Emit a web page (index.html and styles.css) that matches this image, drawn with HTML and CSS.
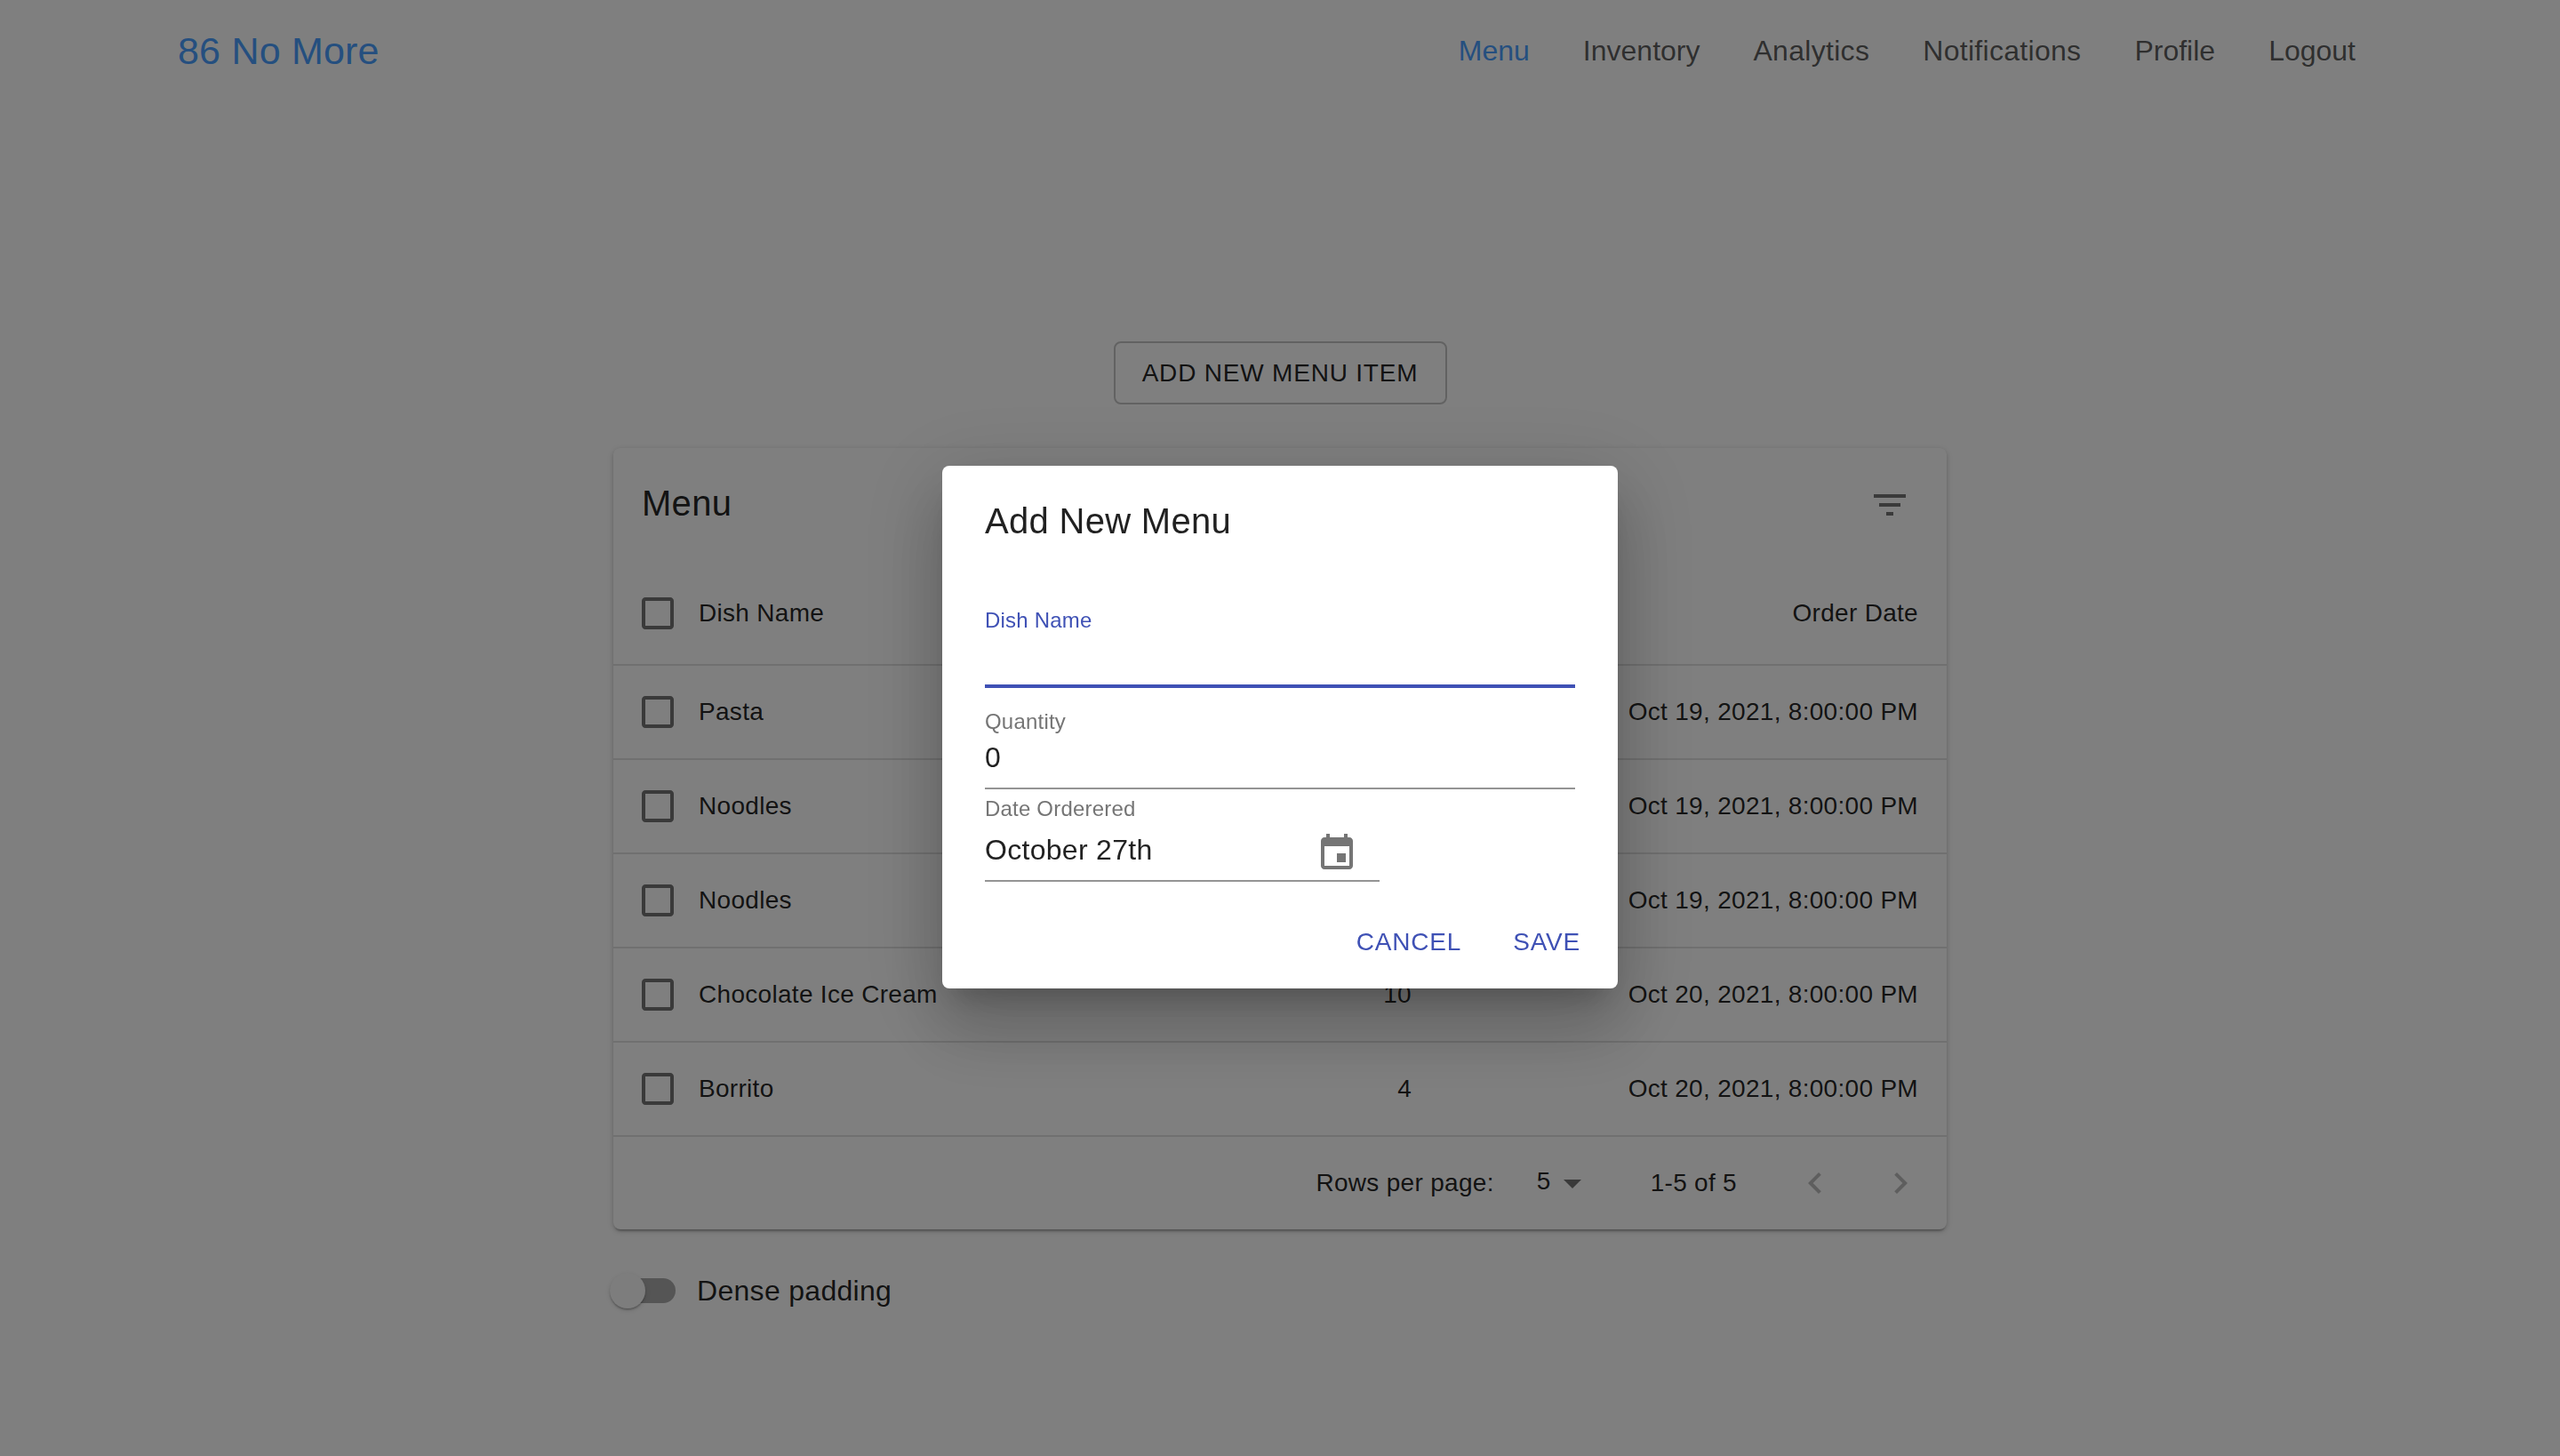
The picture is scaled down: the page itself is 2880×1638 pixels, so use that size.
FILE: index.html
```html
<!DOCTYPE html>
<html lang="en">
<head>
    <meta charset="UTF-8">
    <title>86 No More</title>
    <link rel="stylesheet" href="styles.css">
</head>
<body>
    <nav class="navbar">
        <a class="brand">86 No More</a>
        <div class="nav-links">
            <a class="nav-link active">Menu</a>
            <a class="nav-link">Inventory</a>
            <a class="nav-link nav-link-loose">Analytics</a>
            <a class="nav-link nav-link-loose">Notifications</a>
            <a class="nav-link">Profile</a>
            <a class="nav-link">Logout</a>
        </div>
    </nav>

    <main class="content">
        <button class="add-button">ADD NEW MENU ITEM</button>

        <section class="card">
            <div class="toolbar">
                <h2 class="toolbar-title">Menu</h2>
                <svg class="icon filter-icon" viewBox="0 0 24 24"><path d="M10 18h4v-2h-4v2zM3 6v2h18V6H3zm3 7h12v-2H6v2z"/></svg>
            </div>

            <table class="menu-table">
                <thead>
                    <tr class="head-row">
                        <th class="check-cell"><svg class="icon check-icon" viewBox="0 0 24 24"><path d="M19 5v14H5V5h14m0-2H5c-1.1 0-2 .9-2 2v14c0 1.1.9 2 2 2h14c1.1 0 2-.9 2-2V5c0-1.1-.9-2-2-2z"/></svg></th>
                        <th class="name-cell">Dish Name</th>
                        <th class="qty-cell">Quantity</th>
                        <th class="date-cell">Order Date</th>
                    </tr>
                </thead>
                <tbody>
                    <tr>
                        <td class="check-cell"><svg class="icon check-icon" viewBox="0 0 24 24"><path d="M19 5v14H5V5h14m0-2H5c-1.1 0-2 .9-2 2v14c0 1.1.9 2 2 2h14c1.1 0 2-.9 2-2V5c0-1.1-.9-2-2-2z"/></svg></td>
                        <td class="name-cell">Pasta</td>
                        <td class="qty-cell">5</td>
                        <td class="date-cell">Oct 19, 2021, 8:00:00 PM</td>
                    </tr>
                    <tr>
                        <td class="check-cell"><svg class="icon check-icon" viewBox="0 0 24 24"><path d="M19 5v14H5V5h14m0-2H5c-1.1 0-2 .9-2 2v14c0 1.1.9 2 2 2h14c1.1 0 2-.9 2-2V5c0-1.1-.9-2-2-2z"/></svg></td>
                        <td class="name-cell">Noodles</td>
                        <td class="qty-cell">5</td>
                        <td class="date-cell">Oct 19, 2021, 8:00:00 PM</td>
                    </tr>
                    <tr>
                        <td class="check-cell"><svg class="icon check-icon" viewBox="0 0 24 24"><path d="M19 5v14H5V5h14m0-2H5c-1.1 0-2 .9-2 2v14c0 1.1.9 2 2 2h14c1.1 0 2-.9 2-2V5c0-1.1-.9-2-2-2z"/></svg></td>
                        <td class="name-cell">Noodles</td>
                        <td class="qty-cell">5</td>
                        <td class="date-cell">Oct 19, 2021, 8:00:00 PM</td>
                    </tr>
                    <tr>
                        <td class="check-cell"><svg class="icon check-icon" viewBox="0 0 24 24"><path d="M19 5v14H5V5h14m0-2H5c-1.1 0-2 .9-2 2v14c0 1.1.9 2 2 2h14c1.1 0 2-.9 2-2V5c0-1.1-.9-2-2-2z"/></svg></td>
                        <td class="name-cell">Chocolate Ice Cream</td>
                        <td class="qty-cell">10</td>
                        <td class="date-cell">Oct 20, 2021, 8:00:00 PM</td>
                    </tr>
                    <tr>
                        <td class="check-cell"><svg class="icon check-icon" viewBox="0 0 24 24"><path d="M19 5v14H5V5h14m0-2H5c-1.1 0-2 .9-2 2v14c0 1.1.9 2 2 2h14c1.1 0 2-.9 2-2V5c0-1.1-.9-2-2-2z"/></svg></td>
                        <td class="name-cell">Borrito</td>
                        <td class="qty-cell">4</td>
                        <td class="date-cell">Oct 20, 2021, 8:00:00 PM</td>
                    </tr>
                </tbody>
            </table>

            <div class="pagination">
                <span class="rows-label">Rows per page:</span>
                <span class="rows-value">5</span>
                <svg class="icon arrow-icon" viewBox="0 0 24 24"><path d="M7 10l5 5 5-5z"/></svg>
                <span class="page-range">1-5 of 5</span>
                <span class="page-button"><svg class="icon disabled-icon" viewBox="0 0 24 24"><path d="M15.41 7.41L14 6l-6 6 6 6 1.41-1.41L10.83 12z"/></svg></span>
                <span class="page-button"><svg class="icon disabled-icon" viewBox="0 0 24 24"><path d="M10 6L8.59 7.41 13.17 12l-4.58 4.59L10 18l6-6z"/></svg></span>
            </div>
        </section>

        <div class="dense-row">
            <span class="switch">
                <span class="switch-track"></span>
                <span class="switch-knob"></span>
            </span>
            <span class="dense-label">Dense padding</span>
        </div>
    </main>

    <div class="backdrop">
        <div class="dialog">
            <h2 class="dialog-title">Add New Menu</h2>
            <div class="dialog-body">
                <div class="field field-focused">
                    <label class="field-label">Dish Name</label>
                    <div class="field-empty"></div>
                </div>
                <div class="field field-qty">
                    <label class="field-label">Quantity</label>
                    <div class="field-value">0</div>
                </div>
                <div class="field field-date">
                    <label class="field-label">Date Orderered</label>
                    <div class="date-row">
                        <div class="field-value">October 27th</div>
                        <svg class="icon event-icon" viewBox="0 0 24 24"><path d="M17 12h-5v5h5v-5zM16 1v2H8V1H6v2H5c-1.11 0-1.99.9-1.99 2L3 19c0 1.1.89 2 2 2h14c1.1 0 2-.9 2-2V5c0-1.1-.9-2-2-2h-1V1h-2zm3 18H5V8h14v11z"/></svg>
                    </div>
                </div>
            </div>
            <div class="dialog-actions">
                <button class="text-button">CANCEL</button>
                <button class="text-button">SAVE</button>
            </div>
        </div>
    </div>
</body>
</html>
```

FILE: styles.css
```css
* {
    box-sizing: border-box;
}
body {
    margin: 0;
    min-height: 1638px;
    background-color: #fff;
    font-family: "Liberation Sans", Arial, sans-serif;
    font-variant-ligatures: none;
    color: rgba(0, 0, 0, 0.87);
}
.icon {
    display: block;
    width: 48px;
    height: 48px;
    flex-shrink: 0;
    fill: rgba(0, 0, 0, 0.54);
}

/* top bar */
.navbar {
    display: flex;
    justify-content: space-between;
    align-items: center;
    height: 114px;
    padding: 0 230px 0 200px;
}
.brand {
    font-size: 43px;
    letter-spacing: 0.2px;
    color: #4a9fff;
}
.nav-links {
    display: flex;
    gap: 60px;
}
.nav-link {
    font-size: 32px;
    color: rgba(0, 0, 0, 0.65);
}
.nav-link-loose {
    letter-spacing: 0.3px;
}
.nav-link.active {
    color: #4a9fff;
}

/* page under the dialog */
.content {
    display: flex;
    flex-direction: column;
    align-items: center;
    padding-top: 270px;
}
.add-button {
    width: 375px;
    height: 71px;
    background: none;
    border: 2px solid rgba(0, 0, 0, 0.23);
    border-radius: 8px;
    font-family: inherit;
    font-size: 28px;
    letter-spacing: 0.8px;
    color: rgba(0, 0, 0, 0.87);
}
.card {
    width: 1500px;
    margin-top: 49px;
    border-radius: 8px;
    background-color: #fff;
    box-shadow: 0 4px 2px -2px rgba(0, 0, 0, 0.2), 0 2px 4px 0 rgba(0, 0, 0, 0.14), 0 2px 10px 0 rgba(0, 0, 0, 0.12);
}
.toolbar {
    display: flex;
    justify-content: space-between;
    align-items: center;
    height: 128px;
    padding: 0 40px 0 32px;
}
.toolbar-title {
    margin: 0 0 3px;
    font-size: 40px;
    font-weight: 400;
    letter-spacing: 0.3px;
}
.menu-table {
    width: 100%;
    border-collapse: collapse;
    table-layout: fixed;
    font-size: 28px;
    letter-spacing: 0.3px;
}
.menu-table th,
.menu-table td {
    height: 106px;
    padding: 0;
    border-bottom: 2px solid #e0e0e0;
    font-weight: 400;
    text-align: left;
}
.menu-table .head-row th {
    height: 116px;
}
.menu-table .check-cell {
    width: 96px;
    padding-left: 26px;
}
.menu-table .qty-cell {
    width: 400px;
    text-align: right;
}
.menu-table .date-cell {
    width: 602px;
    padding-right: 32px;
    text-align: right;
}
.pagination {
    display: flex;
    justify-content: flex-end;
    align-items: center;
    height: 104px;
    padding-right: 4px;
    font-size: 28px;
    letter-spacing: 0.3px;
}
.rows-label {
    margin-right: 48px;
}
.rows-value {
    position: relative;
    top: -2px;
}
.page-range {
    margin-left: 64px;
    margin-right: 40px;
}
.page-button {
    padding: 24px;
}
.disabled-icon {
    fill: rgba(0, 0, 0, 0.26);
}
.dense-row {
    display: flex;
    align-items: center;
    width: 1500px;
    margin-top: 49px;
}
.switch {
    position: relative;
    display: block;
    width: 74px;
    height: 40px;
    margin-left: -4px;
}
.switch-track {
    position: absolute;
    left: 6px;
    top: 6px;
    width: 68px;
    height: 28px;
    border-radius: 14px;
    background-color: #aaa;
}
.switch-knob {
    position: absolute;
    left: 0;
    top: 0;
    width: 40px;
    height: 40px;
    border-radius: 50%;
    background-color: #fafafa;
    box-shadow: 0 2px 2px -1px rgba(0, 0, 0, 0.2), 0 2px 2px 0 rgba(0, 0, 0, 0.14), 0 2px 6px 0 rgba(0, 0, 0, 0.12);
}
.dense-label {
    margin-left: 24px;
    font-size: 32px;
    letter-spacing: 0.3px;
}

/* dialog */
.backdrop {
    position: fixed;
    inset: 0;
    display: flex;
    justify-content: center;
    align-items: center;
    background-color: rgba(0, 0, 0, 0.5);
}
.dialog {
    width: 760px;
    margin-bottom: 2px;
    border-radius: 8px;
    background-color: #fff;
    box-shadow: 0 22px 30px -14px rgba(0, 0, 0, 0.2), 0 48px 76px 6px rgba(0, 0, 0, 0.14), 0 18px 92px 16px rgba(0, 0, 0, 0.12);
}
.dialog-title {
    margin: 0;
    padding: 30px 48px 32px;
    font-size: 40px;
    line-height: 64px;
    font-weight: 400;
    letter-spacing: 0.3px;
}
.dialog-body {
    padding: 0 48px;
}
.field-label {
    display: block;
    font-size: 24px;
    line-height: 24px;
    letter-spacing: 0.2px;
    color: #757575;
}
.field-focused {
    margin-top: 36px;
    border-bottom: 4px solid #3f51b5;
}
.field-focused .field-label {
    color: #3f51b5;
}
.field-empty {
    height: 60px;
}
.field-value {
    font-size: 32px;
    line-height: 36px;
    letter-spacing: 0.3px;
}
.field-qty {
    margin-top: 26px;
    padding-bottom: 16px;
    border-bottom: 2px solid #949494;
}
.field-qty .field-value {
    margin-top: 10px;
}
.field-date {
    width: 444px;
    margin-top: 10px;
    border-bottom: 2px solid #949494;
}
.date-row {
    display: flex;
    justify-content: space-between;
    align-items: flex-start;
    padding: 14px 24px 6px 0;
}
.date-row .field-value {
    margin-top: 2px;
}
.event-icon {
    fill: #757575;
}
.dialog-actions {
    display: flex;
    justify-content: flex-end;
    gap: 58px;
    margin-top: 50px;
    padding: 0 42px 34px 0;
}
.text-button {
    padding: 0;
    background: none;
    border: none;
    font-family: inherit;
    font-size: 28px;
    line-height: 36px;
    letter-spacing: 0.8px;
    color: #3f51b5;
}
```
